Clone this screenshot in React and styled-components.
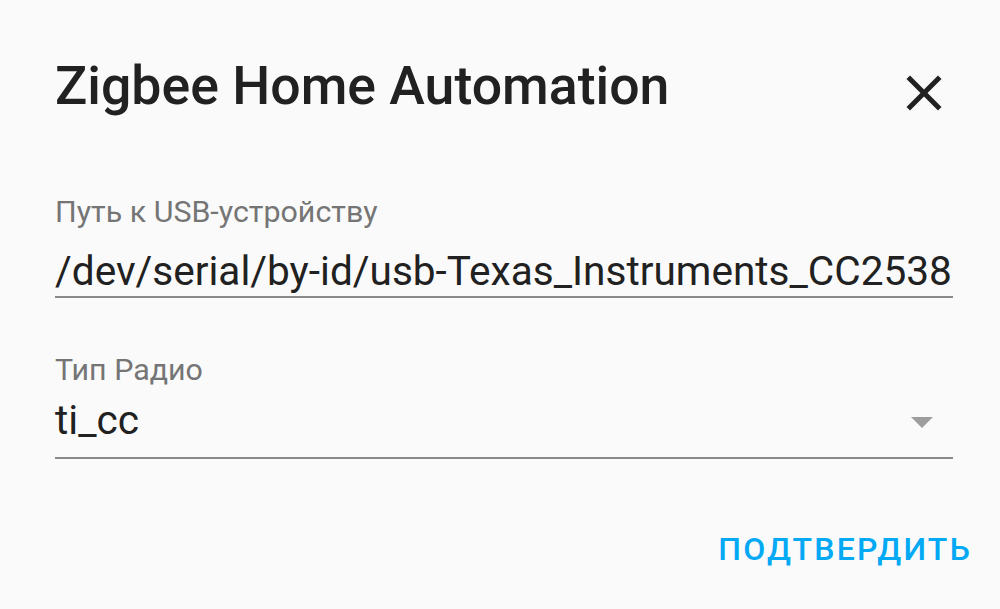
import React from "react";
import styled, { createGlobalStyle } from "styled-components";

const GlobalStyle = createGlobalStyle`
  html, body {
    margin: 0;
    padding: 0;
    background: #fafafa;
  }
  body {
    font-family: Roboto, "Noto Sans", sans-serif;
  }
`;

const Dialog = styled.div`
  width: 1000px;
  height: 609px;
  box-sizing: border-box;
  background: #fafafa;
  padding: 56px 47px 0 55px;
  display: flex;
  flex-direction: column;
`;

const Header = styled.div`
  display: flex;
  justify-content: space-between;
  align-items: flex-start;
  height: 60px;
`;

const Title = styled.h2`
  margin: 0;
  font-size: 53.6px;
  line-height: 60px;
  font-weight: 500;
  color: #212121;
`;

const CloseButton = styled.button`
  border: 0;
  background: none;
  padding: 0;
  margin-top: 7px;
  margin-right: -1px;
  width: 60px;
  height: 60px;
  display: flex;
  cursor: pointer;
`;

const Field = styled.div`
  display: flex;
  flex-direction: column;
  position: relative;
  margin-top: ${(p) => p.$top}px;
  padding-bottom: ${(p) => p.$bottom || 0}px;
  border-bottom: 2px solid #8a8a8a;
`;

const Label = styled.label`
  font-size: 30.4px;
  line-height: 36px;
  color: #757575;
`;

const Value = styled.div`
  margin-top: ${(p) => p.$gap}px;
  font-size: 40.6px;
  line-height: 50px;
  color: #212121;
  white-space: nowrap;
`;

const Arrow = styled.span`
  position: absolute;
  right: 20px;
  top: 65px;
  width: 0;
  height: 0;
  border-left: 11px solid transparent;
  border-right: 11px solid transparent;
  border-top: 11px solid #9e9e9e;
`;

const Actions = styled.div`
  display: flex;
  justify-content: flex-end;
  margin-top: 70px;
  margin-right: -19px;
`;

const ActionButton = styled.button`
  border: 0;
  background: none;
  padding: 0;
  font-family: Roboto, "Noto Sans", sans-serif;
  font-size: 32px;
  line-height: 40px;
  font-weight: 500;
  letter-spacing: 2.2px;
  color: #03a9f4;
  text-transform: uppercase;
  cursor: pointer;
`;

const CloseIcon = () => (
  <svg width="60" height="60" viewBox="0 0 24 24">
    <path
      fill="#212121"
      d="M19,6.41L17.59,5L12,10.59L6.41,5L5,6.41L10.59,12L5,17.59L6.41,19L12,13.41L17.59,19L19,17.59L13.41,12L19,6.41Z"
    />
  </svg>
);

export default function App() {
  return (
    <>
      <GlobalStyle />
      <Dialog>
        <Header>
          <Title>Zigbee Home Automation</Title>
          <CloseButton aria-label="close">
            <CloseIcon />
          </CloseButton>
        </Header>
        <Field $top={78}>
          <Label>Путь к USB-устройству</Label>
          <Value $gap={16}>/dev/serial/by-id/usb-Texas_Instruments_CC2538</Value>
        </Field>
        <Field $top={54} $bottom={12}>
          <Label>Тип Радио</Label>
          <Value $gap={7}>ti_cc</Value>
          <Arrow />
        </Field>
        <Actions>
          <ActionButton>Подтвердить</ActionButton>
        </Actions>
      </Dialog>
    </>
  );
}
